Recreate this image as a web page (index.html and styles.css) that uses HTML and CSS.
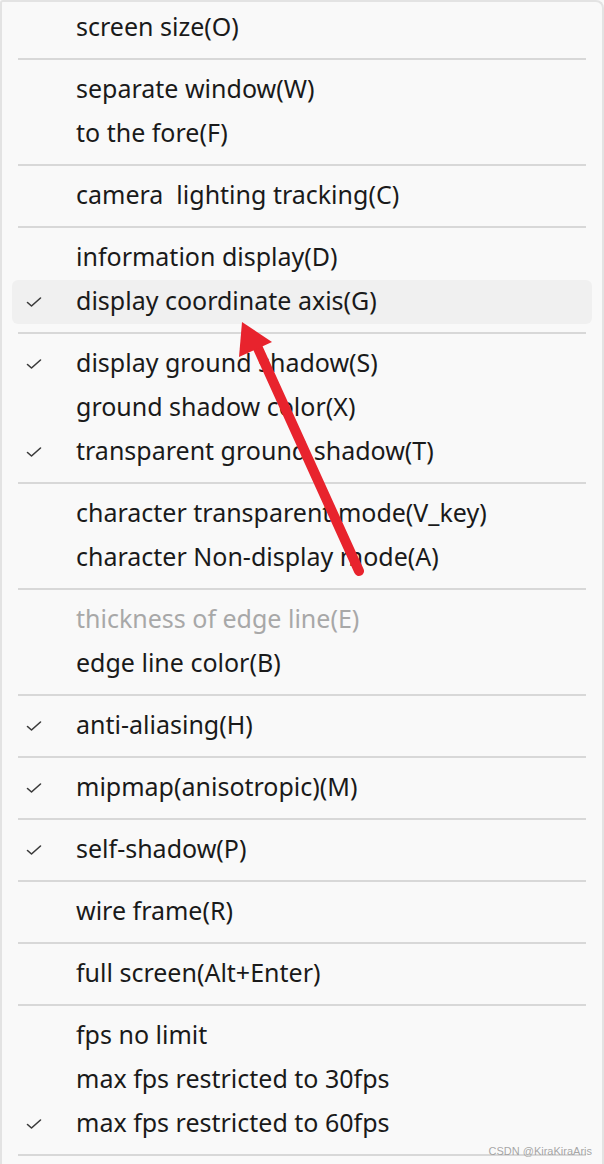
FILE: index.html
```html
<!DOCTYPE html>
<html>
<head>
<meta charset="utf-8">
<link rel="stylesheet" href="styles.css">
</head>
<body>
<div class="menu">
  <div class="item"><span class="check"></span><span class="label">screen size(O)</span></div>
  <div class="sep"></div>
  <div class="item"><span class="check"></span><span class="label">separate window(W)</span></div>
  <div class="item"><span class="check"></span><span class="label">to the fore(F)</span></div>
  <div class="sep"></div>
  <div class="item"><span class="check"></span><span class="label">camera&nbsp; lighting tracking(C)</span></div>
  <div class="sep"></div>
  <div class="item"><span class="check"></span><span class="label">information display(D)</span></div>
  <div class="item hover"><span class="check"><svg viewBox="0 0 16 12" width="16" height="12"><path d="M1.5 6.5 L5.5 10 L14.5 2" fill="none" stroke="#3a3a3a" stroke-width="1.6" stroke-linecap="round" stroke-linejoin="round"/></svg></span><span class="label">display coordinate axis(G)</span></div>
  <div class="sep"></div>
  <div class="item"><span class="check"><svg viewBox="0 0 16 12" width="16" height="12"><path d="M1.5 6.5 L5.5 10 L14.5 2" fill="none" stroke="#3a3a3a" stroke-width="1.6" stroke-linecap="round" stroke-linejoin="round"/></svg></span><span class="label">display ground shadow(S)</span></div>
  <div class="item"><span class="check"></span><span class="label">ground shadow color(X)</span></div>
  <div class="item"><span class="check"><svg viewBox="0 0 16 12" width="16" height="12"><path d="M1.5 6.5 L5.5 10 L14.5 2" fill="none" stroke="#3a3a3a" stroke-width="1.6" stroke-linecap="round" stroke-linejoin="round"/></svg></span><span class="label">transparent ground shadow(T)</span></div>
  <div class="sep"></div>
  <div class="item"><span class="check"></span><span class="label">character transparent mode(V_key)</span></div>
  <div class="item"><span class="check"></span><span class="label">character Non-display mode(A)</span></div>
  <div class="sep"></div>
  <div class="item disabled"><span class="check"></span><span class="label">thickness of edge line(E)</span></div>
  <div class="item"><span class="check"></span><span class="label">edge line color(B)</span></div>
  <div class="sep"></div>
  <div class="item"><span class="check"><svg viewBox="0 0 16 12" width="16" height="12"><path d="M1.5 6.5 L5.5 10 L14.5 2" fill="none" stroke="#3a3a3a" stroke-width="1.6" stroke-linecap="round" stroke-linejoin="round"/></svg></span><span class="label">anti-aliasing(H)</span></div>
  <div class="sep"></div>
  <div class="item"><span class="check"><svg viewBox="0 0 16 12" width="16" height="12"><path d="M1.5 6.5 L5.5 10 L14.5 2" fill="none" stroke="#3a3a3a" stroke-width="1.6" stroke-linecap="round" stroke-linejoin="round"/></svg></span><span class="label">mipmap(anisotropic)(M)</span></div>
  <div class="sep"></div>
  <div class="item"><span class="check"><svg viewBox="0 0 16 12" width="16" height="12"><path d="M1.5 6.5 L5.5 10 L14.5 2" fill="none" stroke="#3a3a3a" stroke-width="1.6" stroke-linecap="round" stroke-linejoin="round"/></svg></span><span class="label">self-shadow(P)</span></div>
  <div class="sep"></div>
  <div class="item"><span class="check"></span><span class="label">wire frame(R)</span></div>
  <div class="sep"></div>
  <div class="item"><span class="check"></span><span class="label">full screen(Alt+Enter)</span></div>
  <div class="sep"></div>
  <div class="item"><span class="check"></span><span class="label">fps no limit</span></div>
  <div class="item"><span class="check"></span><span class="label">max fps restricted to 30fps</span></div>
  <div class="item"><span class="check"><svg viewBox="0 0 16 12" width="16" height="12"><path d="M1.5 6.5 L5.5 10 L14.5 2" fill="none" stroke="#3a3a3a" stroke-width="1.6" stroke-linecap="round" stroke-linejoin="round"/></svg></span><span class="label">max fps restricted to 60fps</span></div>
  <div class="sep"></div>
</div>
<svg class="arrow" width="604" height="1164" viewBox="0 0 604 1164">
  <line x1="257" y1="346" x2="359" y2="571" stroke="#e8232d" stroke-width="10" stroke-linecap="round"/>
  <polygon points="242,322 239,357 272,342" fill="#e8232d"/>
</svg>
<div class="watermark">CSDN @KiraKiraAris</div>
</body>
</html>
```
FILE: styles.css
```css
html, body {
  margin: 0;
  padding: 0;
  background: #f9f9f9;
  overflow: hidden;
  height: 1164px;
}
body {
  position: relative;
  width: 604px;
  font-family: "Noto Sans", "Open Sans", sans-serif;
}
.menu {
  box-sizing: border-box;
  width: 604px;
  height: 1180px;
  background: #f9f9f9;
  border-top: 2px solid #e3e3e3;
  border-left: 2px solid #e3e3e3;
  border-right: 2px solid #e3e3e3;
  border-top-right-radius: 8px;
  border-top-left-radius: 3px;
  padding-top: 4px;
}
.item {
  box-sizing: border-box;
  height: 44px;
  padding-bottom: 3px;
  margin: 0 10px;
  display: flex;
  align-items: center;
  border-radius: 6px;
  color: #1a1a1a;
  font-size: 25px;
}
.item.hover {
  background: #f0f0f0;
}
.item.disabled {
  color: #a8a8a8;
}
.check {
  width: 64px;
  flex: none;
  display: flex;
  align-items: center;
  padding-left: 14px;
  padding-top: 3px;
  box-sizing: border-box;
}
.check svg {
  display: block;
}
.label {
  white-space: nowrap;
  line-height: 1;
}
.sep {
  height: 2px;
  background: #d8d8d8;
  margin: 8px 16px;
}
.arrow {
  position: absolute;
  left: 0;
  top: 0;
  pointer-events: none;
}
.watermark {
  position: absolute;
  right: 12px;
  top: 1145px;
  font-size: 11px;
  color: rgba(150, 150, 150, 0.85);
  font-family: "Liberation Sans", sans-serif;
}
```
